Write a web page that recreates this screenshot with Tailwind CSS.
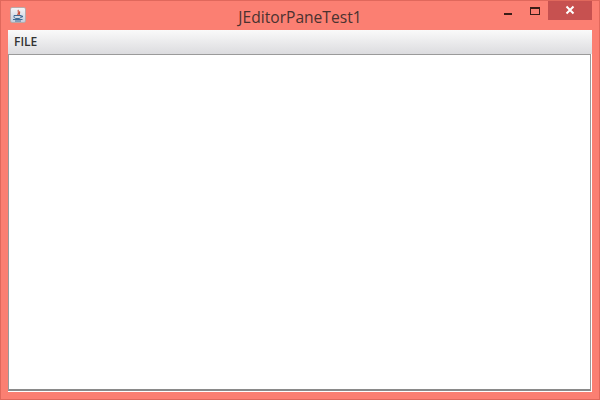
<!DOCTYPE html>
<html>
<head>
<script src="https://cdn.jsdelivr.net/npm/@tailwindcss/browser@4"></script>
</head>
<body class="m-0">
<div class="w-[600px] h-[400px] overflow-hidden flex flex-col bg-[#fb7f72] border border-[#e0685c] font-['Open_Sans',sans-serif]">
  <div class="h-[29px] shrink-0 flex items-start relative">
    <div class="ml-[9px] mt-[6px] w-[16px] h-[16px] rounded-[2px] bg-gradient-to-b from-[#f4f4f6] to-[#c4cede] border border-[#b9a9a9] flex items-center justify-center">
      <svg width="12" height="13" viewBox="0 0 12 13" fill="none">
        <path d="M6.5 1C5 2.5 8 3.5 5.5 6M8 2.5C6.8 3.5 8.2 4.4 7 6" stroke="#c8503a" stroke-width="1.1"/>
        <path d="M2 6.5h7v1.2c0 1-1 1.8-2 1.8H4c-1 0-2-.8-2-1.8z" fill="none" stroke="#3f6a94" stroke-width="1"/>
        <path d="M9 7h1.5v1H9M1 10.5h9.5M3 12h6" stroke="#3f6a94" stroke-width="1"/>
      </svg>
    </div>
    <div class="absolute left-0 top-[6px] w-[598px] text-center text-[15.6px] leading-[20px] text-[#4a3230]">JEditorPaneTest1</div>
    <div class="ml-auto flex items-start">
      <div class="w-[8px] h-[2px] mt-[12px] mr-[18px] bg-[#3a1d18]"></div>
      <div class="w-[10px] h-[8px] mt-[6px] mr-[8px] border border-[#3a1d18] border-t-2"></div>
      <div class="w-[44px] h-[20px] mr-[7px] -mt-px bg-[#c75150] flex items-center justify-center">
        <svg width="10" height="10" viewBox="0 0 10 10" fill="none"><path d="M1.5 1.5l7 7M8.5 1.5l-7 7" stroke="#ffffff" stroke-width="2"/></svg>
      </div>
    </div>
  </div>
  <div class="flex-1 min-h-0 mx-[7px] mb-[7px] flex flex-col bg-white">
    <div class="h-[24px] shrink-0 bg-gradient-to-b from-[#fafafa] to-[#dcdcdf] px-[6px] flex items-center text-[12px] font-semibold text-[#333333]">FILE</div>
    <div class="flex-1 min-h-0 bg-white border border-[#9a9a9a] border-b-2 border-b-[#8a8a8a] mr-px mb-px"></div>
  </div>
</div>
</body>
</html>
